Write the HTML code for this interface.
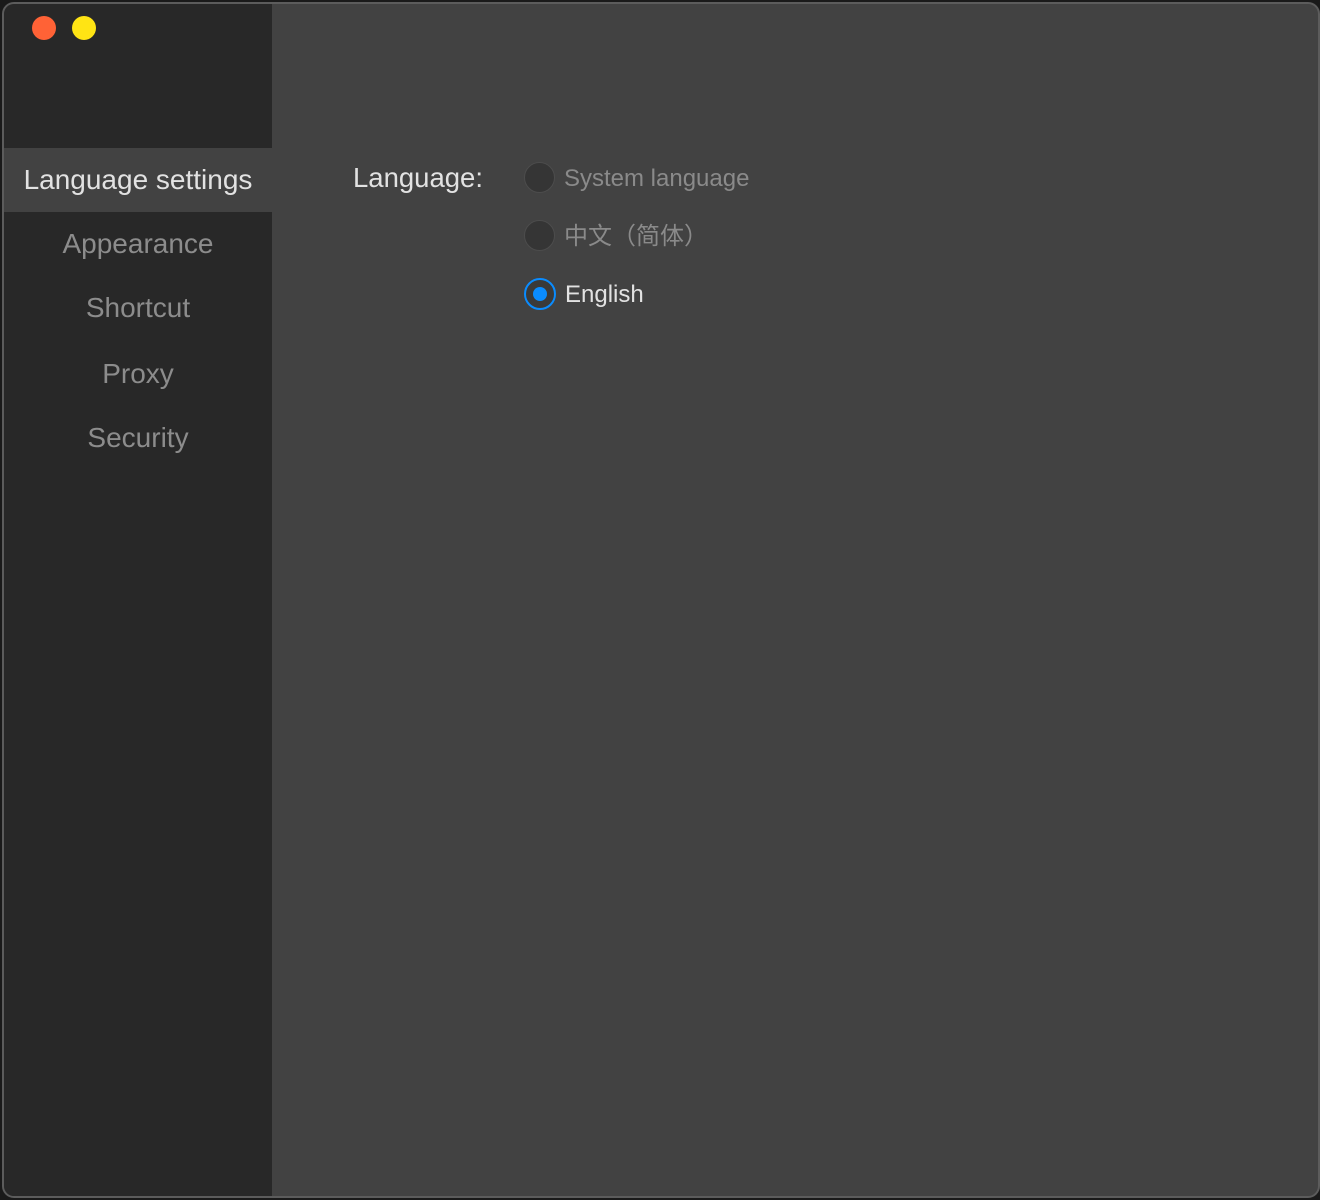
<!DOCTYPE html>
<html><head><meta charset="utf-8"><style>
html,body{margin:0;padding:0;background:#1a1a1a;width:1320px;height:1200px;overflow:hidden}
.win{position:absolute;left:2px;top:2px;width:1314px;height:1192px;border:2px solid #5c5c5c;border-radius:12px;background:#424242;overflow:hidden;font-family:"Liberation Sans","Noto Sans CJK SC",sans-serif}
.side{position:absolute;left:0;top:0;width:268px;height:100%;background:#282828}
.dot{position:absolute;width:24px;height:24px;border-radius:50%;top:12px}
.nav{position:absolute;left:0;width:268px;height:64px;line-height:64px;text-align:center;font-size:28px;color:#8c8c8c}
.nav.sel{background:#424242;color:#e2e2e2}
.lbl{position:absolute;left:349px;top:154px;font-size:27.5px;color:#e2e2e2;line-height:40px}
.r{position:absolute;left:520px;height:40px;line-height:40px;font-size:24px;color:#8a8a8a}
.c{display:inline-block;vertical-align:middle;width:29px;height:29px;border:1.5px solid #4c4c4c;background:#353535;border-radius:50%;margin-right:9px;position:relative;top:-2px;box-sizing:content-box}
.on{border:2px solid #0a8cff;background:#3a3a3a;width:28px;height:28px}
.on:after{content:"";position:absolute;left:7px;top:7px;width:14px;height:14px;border-radius:50%;background:#0a8cff}
</style></head><body>
<div class="win">
<div class="side">
<div class="dot" style="left:28px;background:#ff6236"></div>
<div class="dot" style="left:68px;background:#ffe414"></div>
<div class="nav sel" style="top:144px">Language settings</div>
<div class="nav" style="top:208px">Appearance</div>
<div class="nav" style="top:272px">Shortcut</div>
<div class="nav" style="top:338px">Proxy</div>
<div class="nav" style="top:402px">Security</div>
</div>
<div class="lbl">Language:</div>
<div class="r" style="top:155px"><span class="c"></span>System language</div>
<div class="r" style="top:213px"><span class="c"></span>中文（简体）</div>
<div class="r" style="top:271px;color:#e2e2e2"><span class="c on"></span>English</div>
</div>
</body></html>
